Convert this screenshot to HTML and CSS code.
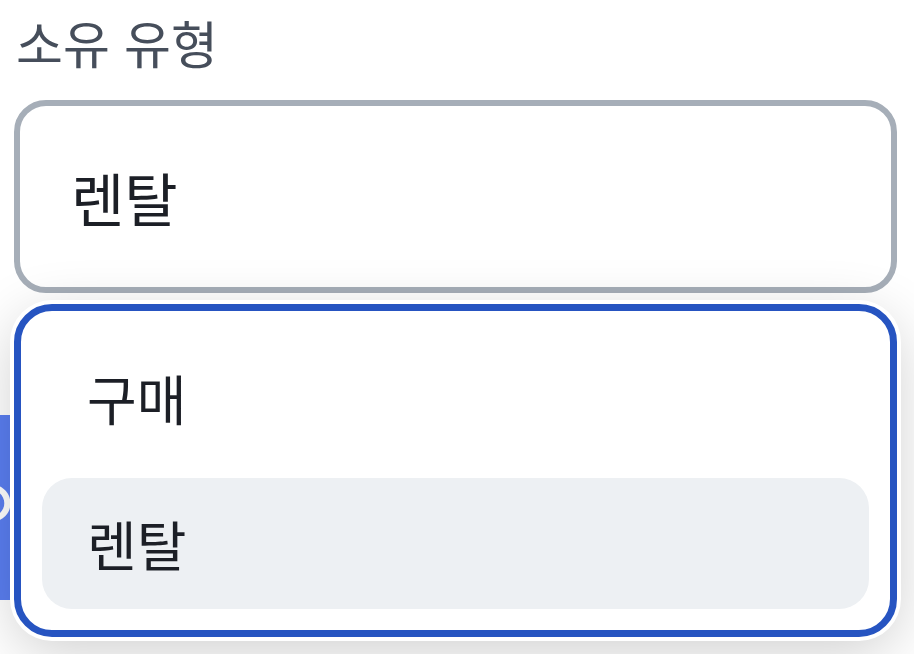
FILE: index.html
```html
<!DOCTYPE html>
<html lang="ko">
<head>
<meta charset="utf-8">
<title>소유 유형</title>
<link rel="stylesheet" href="styles.css">
</head>
<body>
<div class="page">
  <div class="field">
    <div class="label">소유 유형</div>
    <div class="select"><span class="value">렌탈</span></div>
    <div class="menu">
      <div class="option">구매</div>
      <div class="option active">렌탈</div>
    </div>
  </div>
  <div class="under">
    <button class="cta"><span class="cta-text">ㅇ</span></button>
  </div>
</div>
</body>
</html>
```

FILE: styles.css
```css
* { box-sizing: border-box; }
html, body {
  margin: 0;
  padding: 0;
  background: #ffffff;
  font-family: "Noto Sans CJK KR", "Noto Sans", sans-serif;
}
.page {
  width: 914px;
  height: 654px;
  overflow: hidden;
  position: relative;
}
.field {
  position: relative;
  margin-left: 14px;
  width: 883px;
  z-index: 2;
}
.label {
  font-size: 51px;
  line-height: 64px;
  height: 88px;
  padding-top: 10px;
  padding-left: 2px;
  color: #464e5b;
  margin-bottom: 12px;
}
.select {
  height: 193px;
  border: 6px solid #a6aeb8;
  border-radius: 32px;
  background: #ffffff;
  display: flex;
  align-items: center;
  padding-left: 51px;
}
.value {
  font-size: 58px;
  color: #1c1f26;
  line-height: 1;
}
.menu {
  position: absolute;
  left: 0;
  right: 0;
  top: calc(100% + 11px);
  height: 333px;
  background: #ffffff;
  border: 7px solid #2654c1;
  border-radius: 38px;
  padding: 21px;
  display: flex;
  flex-direction: column;
  gap: 15px;
  box-shadow: 0 0 0 4px #ffffff, 0 14px 60px rgba(0, 0, 0, 0.2);
}
.option {
  height: 131px;
  border-radius: 30px;
  display: flex;
  align-items: center;
  padding-left: 45px;
  font-size: 54px;
  color: #1c1f26;
  line-height: 1;
}
.option.active {
  background: #edf0f3;
}
.under {
  position: relative;
  z-index: 1;
  margin-top: 122px;
  display: flex;
}
.cta {
  width: 10px;
  height: 185px;
  padding: 0;
  border: none;
  background: #5a7ef0;
  color: #ffffff;
  display: flex;
  align-items: center;
  justify-content: flex-end;
  overflow: hidden;
  font-family: "Noto Sans CJK KR", sans-serif;
}
.cta-text {
  flex-shrink: 0;
  font-size: 76px;
  line-height: 1;
  margin-right: -14px;
  margin-top: -18px;
}
```
